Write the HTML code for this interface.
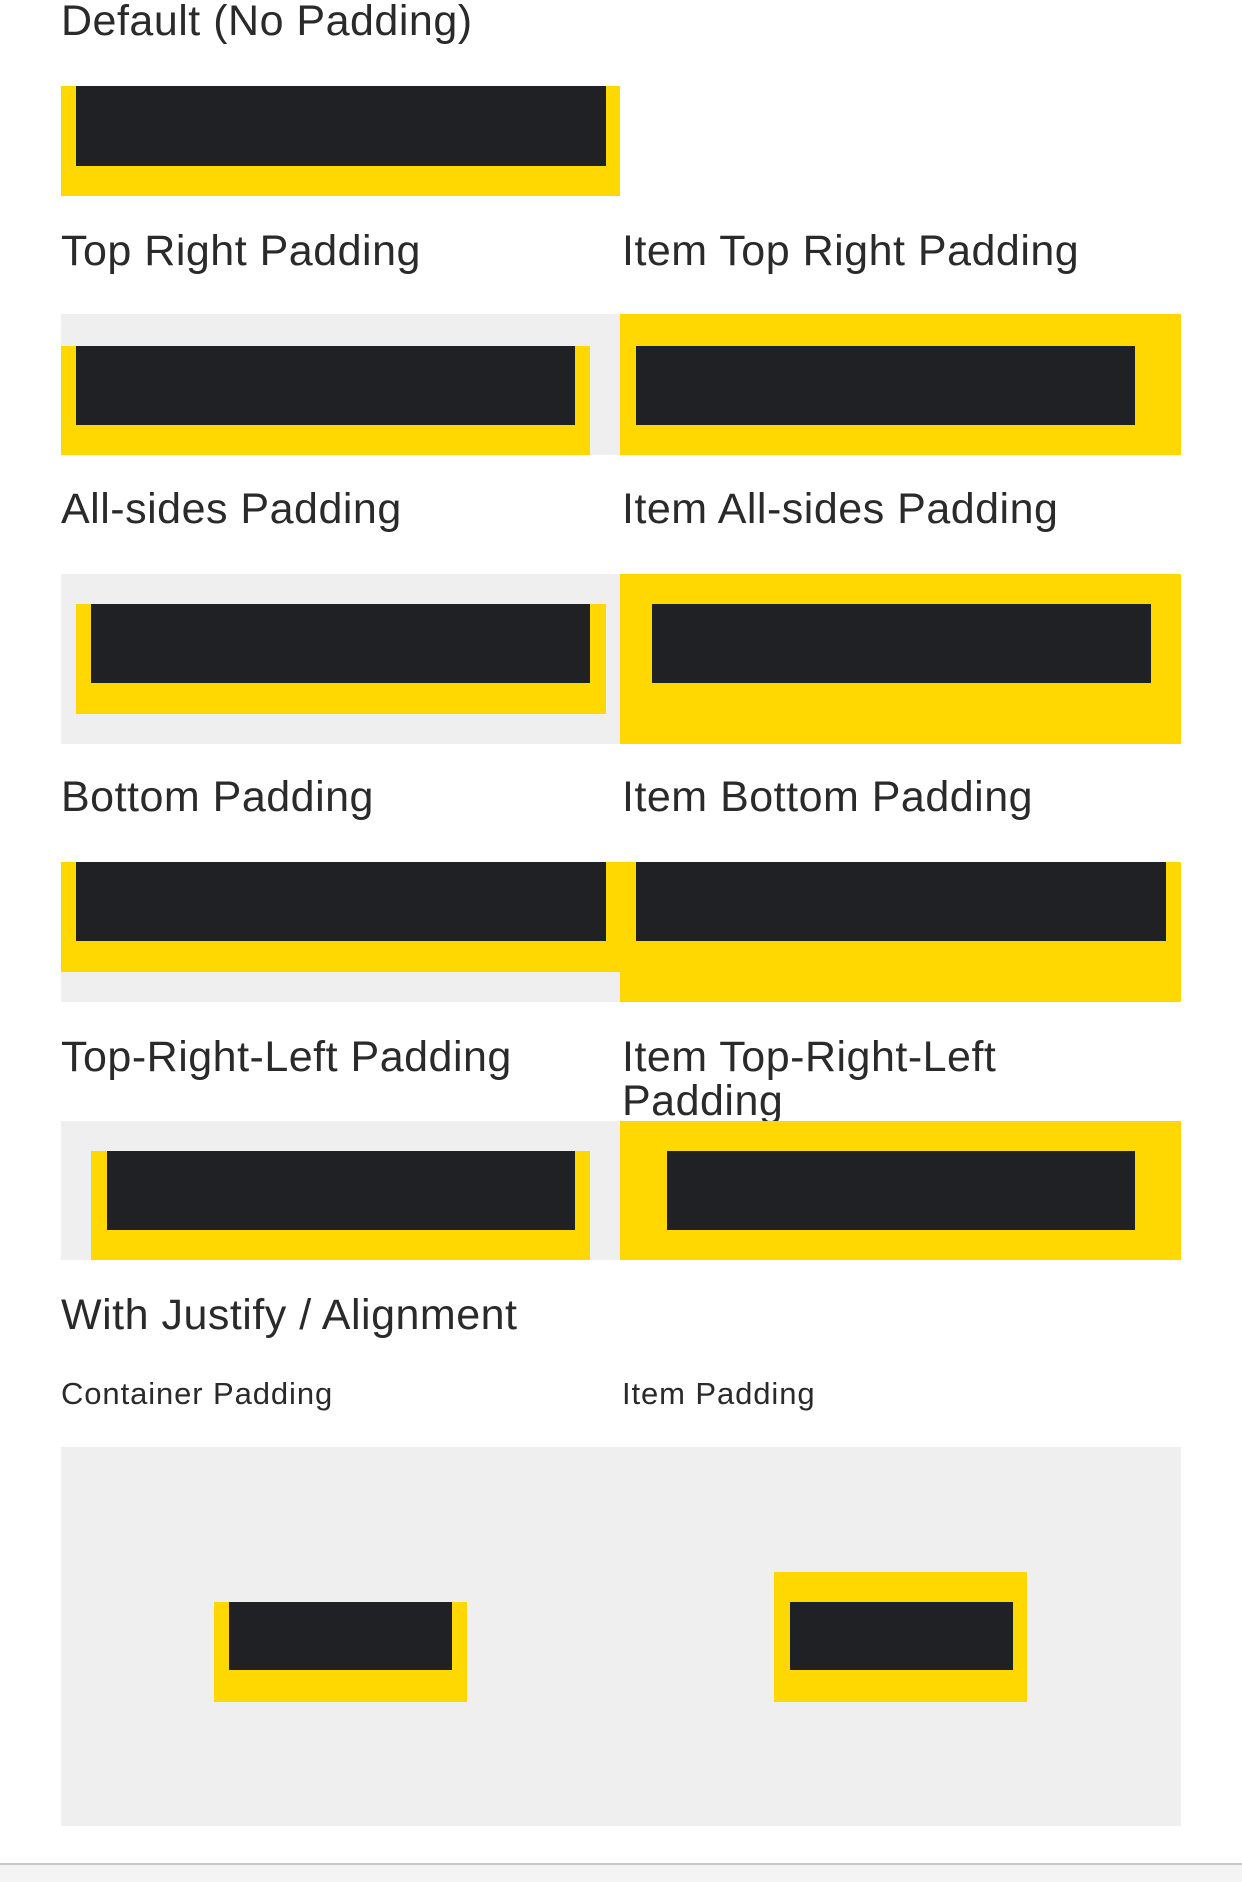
<!DOCTYPE html>
<html><head><meta charset="utf-8"><style>
*{margin:0;padding:0;box-sizing:border-box}
body{width:1242px;height:1882px;background:#fff;position:relative;overflow:hidden;font-family:"Liberation Sans",sans-serif;color:#2a2a2a}
.a{position:absolute}
.t{position:absolute;font-size:43px;line-height:43px;white-space:nowrap;letter-spacing:0.5px}
.s{position:absolute;font-size:31px;line-height:31px;white-space:nowrap;letter-spacing:0.9px}
.g{background:#efefef}.y{background:#fed800}.d{background:#202124}
</style></head><body>
<div class="t" style="left:61px;top:0">Default (No Padding)</div>
<div class="a y" style="left:61px;top:86px;width:559px;height:110px"></div>
<div class="a d" style="left:76px;top:86px;width:530px;height:80px"></div>

<div class="t" style="left:61px;top:230px">Top Right Padding</div>
<div class="t" style="left:622px;top:230px">Item Top Right Padding</div>
<div class="a g" style="left:61px;top:314px;width:559px;height:141px"></div>
<div class="a y" style="left:61px;top:346px;width:529px;height:109px"></div>
<div class="a d" style="left:76px;top:346px;width:499px;height:79px"></div>
<div class="a y" style="left:620px;top:314px;width:561px;height:141px"></div>
<div class="a d" style="left:636px;top:346px;width:499px;height:79px"></div>

<div class="t" style="left:61px;top:488px">All-sides Padding</div>
<div class="t" style="left:622px;top:488px">Item All-sides Padding</div>
<div class="a g" style="left:61px;top:574px;width:559px;height:170px"></div>
<div class="a y" style="left:76px;top:604px;width:530px;height:110px"></div>
<div class="a d" style="left:91px;top:604px;width:499px;height:79px"></div>
<div class="a y" style="left:620px;top:574px;width:561px;height:170px"></div>
<div class="a d" style="left:652px;top:604px;width:499px;height:79px"></div>

<div class="t" style="left:61px;top:776px">Bottom Padding</div>
<div class="t" style="left:622px;top:776px">Item Bottom Padding</div>
<div class="a g" style="left:61px;top:862px;width:559px;height:140px"></div>
<div class="a y" style="left:61px;top:862px;width:559px;height:110px"></div>
<div class="a d" style="left:76px;top:862px;width:530px;height:79px"></div>
<div class="a y" style="left:620px;top:862px;width:561px;height:140px"></div>
<div class="a d" style="left:636px;top:862px;width:530px;height:79px"></div>

<div class="t" style="left:61px;top:1036px">Top-Right-Left Padding</div>
<div class="t" style="left:622px;top:1036px">Item Top-Right-Left</div>
<div class="t" style="left:622px;top:1080px">Padding</div>
<div class="a g" style="left:61px;top:1121px;width:559px;height:139px"></div>
<div class="a y" style="left:91px;top:1151px;width:499px;height:109px"></div>
<div class="a d" style="left:107px;top:1151px;width:468px;height:79px"></div>
<div class="a y" style="left:620px;top:1121px;width:561px;height:139px"></div>
<div class="a d" style="left:667px;top:1151px;width:468px;height:79px"></div>

<div class="t" style="left:61px;top:1294px">With Justify / Alignment</div>
<div class="s" style="left:61px;top:1378px">Container Padding</div>
<div class="s" style="left:622px;top:1378px">Item Padding</div>
<div class="a g" style="left:61px;top:1447px;width:1120px;height:379px"></div>
<div class="a y" style="left:214px;top:1602px;width:253px;height:100px"></div>
<div class="a d" style="left:229px;top:1602px;width:223px;height:68px"></div>
<div class="a y" style="left:774px;top:1572px;width:253px;height:130px"></div>
<div class="a d" style="left:790px;top:1602px;width:223px;height:68px"></div>

<div class="a" style="left:0;top:1863px;width:1242px;height:2px;background:#c8c8c8"></div>
<div class="a" style="left:0;top:1865px;width:1242px;height:17px;background:#f4f4f4"></div>
</body></html>
